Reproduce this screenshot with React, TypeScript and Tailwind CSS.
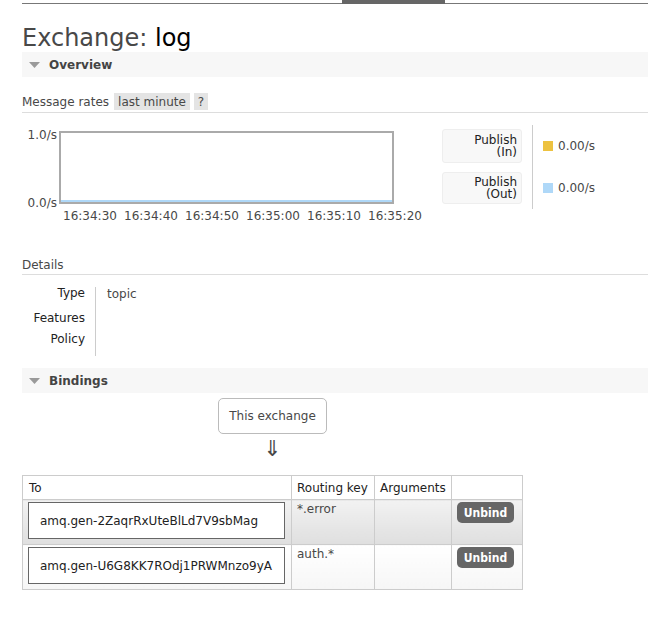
import React from "react";

const Tri = () => (
  <svg width="11" height="6" viewBox="0 0 11 6" className="shrink-0">
    <path d="M0 0H11L5.5 6Z" fill="#9a9a9a" />
  </svg>
);

function SectionBar({ title }: { title: string }) {
  return (
    <div className="h-[25px] bg-[#f7f7f7] flex items-center pl-[7px] gap-[9px]">
      <Tri />
      <span className="font-bold text-[#444] leading-[14px]">{title}</span>
    </div>
  );
}

const times = ["16:34:30", "16:34:40", "16:34:50", "16:35:00", "16:35:10", "16:35:20"];

const bindings = [
  { to: "amq.gen-2ZaqrRxUteBlLd7V9sbMag", key: "*.error", alt: false },
  { to: "amq.gen-U6G8KK7ROdj1PRWMnzo9yA", key: "auth.*", alt: true },
];

export default function App() {
  return (
    <div className="w-[648px] h-[623px] overflow-hidden bg-white text-[12px] text-[#484848] font-['DejaVu_Sans',Verdana,sans-serif]">
      {/* top nav line */}
      <div className="pl-[22px] flex items-end h-[4px]">
        <div className="w-[320px] h-px bg-[#777]" />
        <div className="w-[103px] h-[4px] bg-[#666]" />
        <div className="flex-1 h-px bg-[#777]" />
      </div>

      <div className="pl-[22px]">
        {/* title */}
        <div className="mt-[20px] h-[28px] leading-[28px] text-[24px] whitespace-nowrap">
          <span className="text-[#484848]">Exchange: </span>
          <span className="text-black">log</span>
        </div>

        <SectionBar title="Overview" />

        {/* message rates */}
        <div className="mt-[16px] h-[20px] border-b border-[#ddd] flex items-start whitespace-nowrap">
          <span className="leading-[17px] pt-[1px]">Message rates</span>
          <span className="ml-[5px] bg-[#e4e4e4] px-[4px] h-[17px] leading-[17px] pt-[1px]">last minute</span>
          <span className="ml-[4px] bg-[#e4e4e4] px-[4px] h-[17px] leading-[17px] pt-[1px]">?</span>
        </div>

        {/* chart + stats */}
        <div className="flex mt-[12px]">
          <div className="w-[420px] pt-[6px]">
            <div className="flex items-start">
              <div className="w-[37px] h-[82px] -mt-[3px] flex flex-col justify-between items-end pr-[2px] leading-[14px]">
                <span>1.0/s</span>
                <span>0.0/s</span>
              </div>
              <div className="w-[335px] h-[73px] border-2 border-[#aaa] flex flex-col justify-end">
                <div className="h-[2px] bg-[#afd8f8]" />
              </div>
            </div>
            <div className="flex ml-[41px] mt-[-1px] leading-[14px] whitespace-nowrap">
              {times.map((t) => (
                <div key={t} className="w-[61px] shrink-0">
                  {t}
                </div>
              ))}
            </div>
          </div>

          <div className="flex">
            <div className="flex flex-col gap-[9px] pt-[4px] w-[80px]">
              <div className="h-[34px] bg-[#f8f8f8] border border-[#eee] rounded-[3px] text-right pr-[4px] pt-[4px] leading-[12px] text-[#222]">
                Publish
                <br />
                (In)
              </div>
              <div className="h-[32px] bg-[#f8f8f8] border border-[#eee] rounded-[3px] text-right pr-[4px] pt-[3px] leading-[12px] text-[#222]">
                Publish
                <br />
                (Out)
              </div>
            </div>
            <div className="ml-[10px] w-px h-[84px] bg-[#ccc]" />
            <div className="pl-[10px] flex flex-col gap-[9px] pt-[4px] whitespace-nowrap">
              <div className="h-[34px] flex items-center gap-[5px]">
                <span className="w-[10px] h-[10px] bg-[#edc240]" />
                <span>0.00/s</span>
              </div>
              <div className="h-[32px] flex items-center gap-[5px]">
                <span className="w-[10px] h-[10px] bg-[#afd8f8]" />
                <span>0.00/s</span>
              </div>
            </div>
          </div>
        </div>

        {/* details */}
        <div className="mt-[35px] leading-[14px] pb-[2px] border-b border-[#ddd]">Details</div>
        <div className="mt-[12px] flex">
          <div className="w-[74px] border-r border-[#ccc] pr-[10px] text-right text-[#222] h-[69px] leading-[14px]">
            <div className="-mt-[1px]">Type</div>
            <div className="mt-[11px]">Features</div>
            <div className="mt-[7px]">Policy</div>
          </div>
          <div className="pl-[11px] leading-[14px]">topic</div>
        </div>

        <div className="mt-[12px]">
          <SectionBar title="Bindings" />
        </div>

        {/* this exchange */}
        <div className="ml-[196px] mt-[5px] w-[109px] h-[36px] border border-[#bbb] rounded-[5px] flex items-center justify-center leading-[14px]">
          This exchange
        </div>
        <div className="ml-[196px] w-[109px] mt-[3px] h-[24px] text-center text-[22px] leading-[24px] text-[#484848]">⇓</div>

        {/* bindings table */}
        <table className="mt-[14px] w-[500px] table-fixed border-collapse">
          <colgroup>
            <col className="w-[269px]" />
            <col className="w-[83px]" />
            <col className="w-[77px]" />
            <col className="w-[71px]" />
          </colgroup>
          <thead>
            <tr className="h-[24px]">
              <th className="border border-[#ccc] text-left font-normal px-[6px] text-[#222] leading-[14px]">To</th>
              <th className="border border-[#ccc] text-left font-normal px-[5px] text-[#222] leading-[14px] whitespace-nowrap">Routing key</th>
              <th className="border border-[#ccc] text-left font-normal px-[5px] text-[#222] leading-[14px]">Arguments</th>
              <th className="border border-[#ccc]" />
            </tr>
          </thead>
          <tbody>
            {bindings.map((b) => {
              const bg = b.alt
                ? "bg-linear-to-b from-[#ffffff] to-[#f6f6f6]"
                : "bg-linear-to-b from-[#f2f2f2] to-[#dfdfdf]";
              return (
                <tr key={b.to} className="h-[45px]">
                  <td className={`border border-[#ccc] align-top pt-[2px] pl-[5px] ${bg}`}>
                    <div className="w-[257px] h-[37px] border border-[#666] bg-white flex items-center pl-[11px] text-[#222] whitespace-nowrap">
                      {b.to}
                    </div>
                  </td>
                  <td className={`border border-[#ccc] align-top pt-[2px] px-[5px] leading-[14px] ${bg}`}>{b.key}</td>
                  <td className={`border border-[#ccc] ${bg}`} />
                  <td className={`border border-[#ccc] align-top pt-[2px] pl-[5px] ${bg}`}>
                    <div className="w-[57px] h-[21px] rounded-[5px] bg-[#666] text-white text-[12px] font-bold font-['DejaVu_Sans_Condensed','DejaVu_Sans',sans-serif] flex items-center justify-center leading-[14px]">
                      Unbind
                    </div>
                  </td>
                </tr>
              );
            })}
          </tbody>
        </table>
      </div>
    </div>
  );
}
